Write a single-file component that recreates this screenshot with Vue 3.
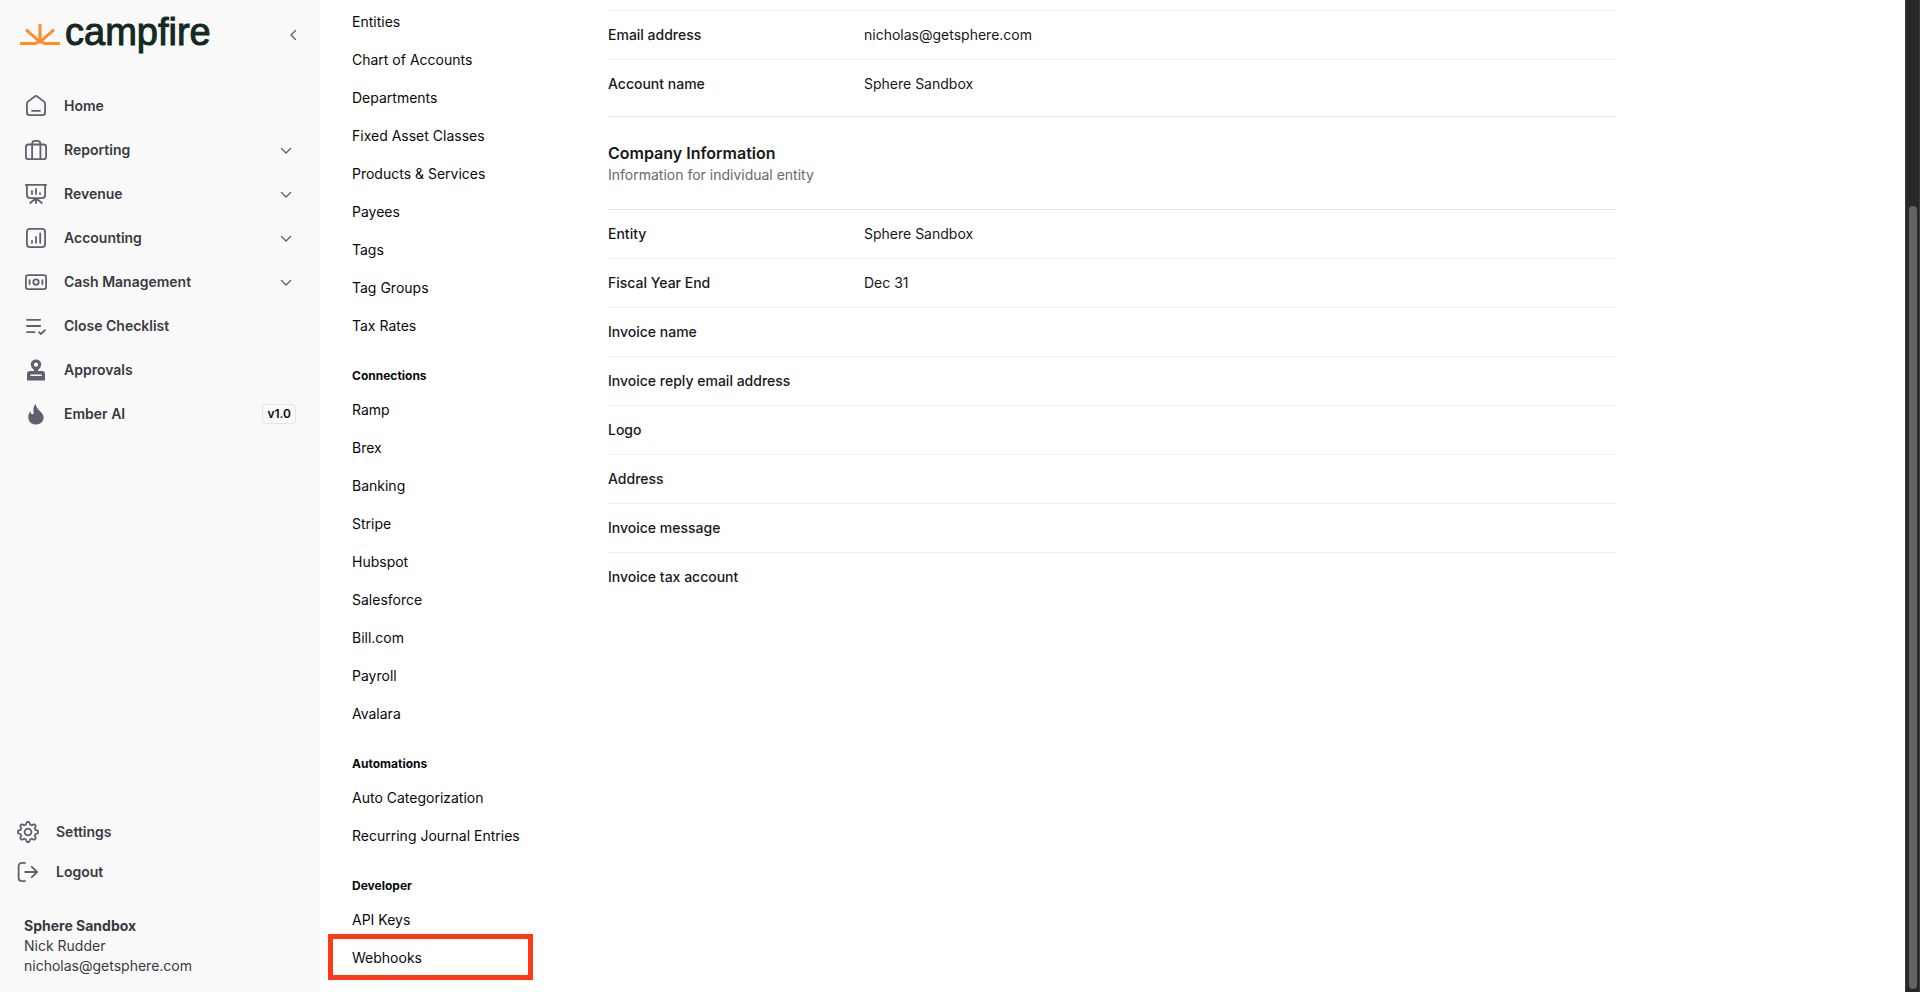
<template>
  <div class="app">
    <aside class="sidebar">
      <header class="sidebar-header">
        <a href="#" class="logo">
          <svg class="logo-mark" viewBox="0 0 40 24" aria-hidden="true">
            <path d="M0 22.4H15.5L18 21H22L24.5 22.4H40" />
            <path d="M20 3V22M6 8.6L20 21L34 8.6" />
          </svg>
          <span class="logo-text">campfire</span>
        </a>
        <button class="collapse" aria-label="Collapse sidebar">
          <svg viewBox="0 0 20 20"><path d="M12.5 5.5L8 10L12.5 14.5" /></svg>
        </button>
      </header>

      <nav class="main-nav">
        <a v-for="item in mainNav" :key="item.label" href="#" class="nav-item">
          <svg class="icon" viewBox="0 0 24 24" aria-hidden="true">
            <path v-for="d in icons[item.icon].lines" :key="d" :d="d" />
            <path v-for="d in icons[item.icon].fills" :key="d" :d="d" class="solid" />
          </svg>
          <span>{{ item.label }}</span>
          <svg v-if="item.expandable" class="chevron" viewBox="0 0 20 20" aria-hidden="true">
            <path d="M5.5 8.5L10 13L14.5 8.5" />
          </svg>
          <span v-if="item.badge" class="badge">{{ item.badge }}</span>
        </a>
      </nav>

      <nav class="bottom-nav">
        <a v-for="item in bottomNav" :key="item.label" href="#" class="nav-item">
          <svg class="icon" viewBox="0 0 24 24" aria-hidden="true">
            <path v-for="d in icons[item.icon].lines" :key="d" :d="d" />
          </svg>
          <span>{{ item.label }}</span>
        </a>
      </nav>

      <div class="account">
        <strong>Sphere Sandbox</strong>
        <span>Nick Rudder</span>
        <span>nicholas@getsphere.com</span>
      </div>
    </aside>

    <nav class="settings-nav">
      <section v-for="group in settingsNav" :key="group.title" class="group">
        <h3 v-if="group.title" class="group-title">{{ group.title }}</h3>
        <a v-for="link in group.links" :key="link" href="#" class="settings-link"
          :class="{ highlighted: link === 'Webhooks' }">{{ link }}</a>
      </section>
    </nav>

    <main class="content">
      <dl class="rows">
        <div v-for="row in accountRows" :key="row.label" class="row">
          <dt>{{ row.label }}</dt>
          <dd>{{ row.value }}</dd>
        </div>
      </dl>
      <header class="section-header">
        <h2>Company Information</h2>
        <p>Information for individual entity</p>
      </header>
      <dl class="rows company">
        <div v-for="row in companyRows" :key="row.label" class="row">
          <dt>{{ row.label }}</dt>
          <dd>{{ row.value }}</dd>
        </div>
      </dl>
    </main>

    <div class="scrollbar">
      <div class="scrollbar-thumb"></div>
    </div>
  </div>
</template>

<script setup>
const mainNav = [
  { label: 'Home', icon: 'home' },
  { label: 'Reporting', icon: 'briefcase', expandable: true },
  { label: 'Revenue', icon: 'presentation', expandable: true },
  { label: 'Accounting', icon: 'chart', expandable: true },
  { label: 'Cash Management', icon: 'cash', expandable: true },
  { label: 'Close Checklist', icon: 'checklist' },
  { label: 'Approvals', icon: 'stamp' },
  { label: 'Ember AI', icon: 'flame', badge: 'v1.0' }
]

const bottomNav = [
  { label: 'Settings', icon: 'gear' },
  { label: 'Logout', icon: 'logout' }
]

const settingsNav = [
  {
    title: '',
    links: [
      'Entities', 'Chart of Accounts', 'Departments', 'Fixed Asset Classes',
      'Products & Services', 'Payees', 'Tags', 'Tag Groups', 'Tax Rates'
    ]
  },
  {
    title: 'Connections',
    links: [
      'Ramp', 'Brex', 'Banking', 'Stripe', 'Hubspot', 'Salesforce', 'Bill.com', 'Payroll', 'Avalara'
    ]
  },
  { title: 'Automations', links: ['Auto Categorization', 'Recurring Journal Entries'] },
  { title: 'Developer', links: ['API Keys', 'Webhooks'] }
]

const accountRows = [
  { label: 'Email address', value: 'nicholas@getsphere.com' },
  { label: 'Account name', value: 'Sphere Sandbox' }
]

const companyRows = [
  { label: 'Entity', value: 'Sphere Sandbox' },
  { label: 'Fiscal Year End', value: 'Dec 31' },
  { label: 'Invoice name', value: '' },
  { label: 'Invoice reply email address', value: '' },
  { label: 'Logo', value: '' },
  { label: 'Address', value: '' },
  { label: 'Invoice message', value: '' },
  { label: 'Invoice tax account', value: '' }
]

// Eight rounded teeth around the centre of a 24px box
const gearOutline = () => {
  const points = []
  for (let i = 0; i < 144; i++) {
    const angle = (i / 144) * Math.PI * 2
    const radius = 8.8 + 1.2 * Math.max(-1, Math.min(1, 1.5 * Math.cos(angle * 8)))
    points.push(`${(12 + radius * Math.sin(angle)).toFixed(2)} ${(12 - radius * Math.cos(angle)).toFixed(2)}`)
  }
  return `M${points.join('L')}Z`
}

const icons = {
  home: {
    lines: [
      'M2.9 9.7Q2.9 8.4 3.9 7.6L11 2.3Q12 1.6 13 2.3L20.1 7.6Q21.1 8.4 21.1 9.7V18.5Q21.1 21.2 18.4 21.2H5.6Q2.9 21.2 2.9 18.5Z',
      'M8 16.8H16'
    ]
  },
  briefcase: {
    lines: [
      'M4.5 6.5H19.5Q22.1 6.5 22.1 9V18.7Q22.1 21.2 19.5 21.2H4.5Q1.9 21.2 1.9 18.7V9Q1.9 6.5 4.5 6.5Z',
      'M8.1 21V6.2Q8.1 2.9 11 2.9H13.4Q16.4 2.9 16.4 6.2V21'
    ]
  },
  presentation: {
    lines: [
      'M1.8 2.8H22.2',
      'M2.9 3V12.5Q2.9 16.2 6.5 16.2H17.5Q21.1 16.2 21.1 12.5V3',
      'M8 9V12M12 7V12M16 11.2V12',
      'M12 17V21M11 17L6.2 21M13 17L17.8 21'
    ]
  },
  chart: {
    lines: [
      'M6 2.8H18Q21.1 2.8 21.1 6V18Q21.1 21.2 18 21.2H6Q2.9 21.2 2.9 18V6Q2.9 2.8 6 2.8Z',
      'M8 15V16.8M12 11V16.8M16.2 7.3V16.8'
    ]
  },
  cash: {
    lines: [
      'M4 5.2H20Q22.1 5.2 22.1 7.3V17Q22.1 19.1 20 19.1H4Q1.9 19.1 1.9 17V7.3Q1.9 5.2 4 5.2Z',
      'M12 9.4A2.7 2.7 0 1 1 12 14.8A2.7 2.7 0 1 1 12 9.4Z',
      'M5.6 10.2V14M18.4 10.2V14'
    ]
  },
  checklist: {
    lines: ['M3 5.8H16.2M3 12H16.2M3 18.2H10.5', 'M15 18.2L17 20L21 16.2']
  },
  stamp: {
    lines: [],
    fills: [
      'M12 1.4C15.1 1.4 17.2 3.6 17.2 6.5C17.2 8.8 15.9 9.9 14.9 11C14.2 11.8 14 12.3 13.9 13H19Q21 13.4 21 16V22.6H3V16Q3 13.4 5 13H10.1C10 12.3 9.8 11.8 9.1 11C8.1 9.9 6.8 8.8 6.8 6.5C6.8 3.6 8.9 1.4 12 1.4ZM12 4.6A2.1 2.1 0 1 0 12 8.8A2.1 2.1 0 1 0 12 4.6ZM6.5 16.4V18H17.7V16.4Z'
    ]
  },
  flame: {
    lines: [],
    fills: [
      'M11.7 2C12 5.4 14 7.2 16.1 9.2C18.2 11.2 19.6 12.9 19.6 15.6C19.6 19.8 16.3 22.5 12 22.5C7.6 22.5 4.3 19.7 4.3 15.2C4.3 12.8 5 10.8 6.2 9.2C6.6 11 7.2 12.2 8.7 12.2C10.2 12.2 9.7 10.4 9.4 8.2C9.1 5.7 10.1 3.4 11.7 2Z'
    ]
  },
  gear: {
    lines: [gearOutline(), 'M12 8.6A3.4 3.4 0 1 1 12 15.4A3.4 3.4 0 1 1 12 8.6Z']
  },
  logout: {
    lines: ['M9 2.9H6.3Q2.6 2.9 2.6 6.6V17.4Q2.6 21.1 6.3 21.1H9', 'M9.2 12H21M15.8 6.8L21.2 12L15.8 17.2']
  }
}
</script>

<style>
body {
  background-color: #ffffff;
}
</style>

<style scoped>
.app {
  display: flex;
  min-height: 100vh;
  font-family: Inter, "Liberation Sans", sans-serif;
  font-size: 14px;
  line-height: 20px;
  color: #18181b;
}

a {
  color: inherit;
  text-decoration: none;
}

svg {
  display: block;
  fill: none;
  stroke: #62606e;
  stroke-linecap: round;
  stroke-linejoin: round;
}

.sidebar {
  display: flex;
  flex-direction: column;
  flex: none;
  width: 320px;
  padding-bottom: 16px;
  box-sizing: border-box;
  background-color: #f9f9f9;
  color: #3a3942;
}

.sidebar-header {
  display: flex;
  align-items: center;
  justify-content: space-between;
  height: 46px;
  padding: 12px 17px 12px 20px;
}

.logo {
  display: flex;
  align-items: baseline;
  align-self: flex-start;
  gap: 5px;
}

.logo-mark {
  width: 40px;
  height: 24px;
  stroke: #ff8d2b;
  stroke-width: 3;
  stroke-linecap: butt;
}

.logo-text {
  font-family: "Liberation Sans", sans-serif;
  font-size: 38px;
  line-height: 40px;
  color: #14291f;
  -webkit-text-stroke: 1px #14291f;
}

.collapse {
  padding: 0;
  border: none;
  background: none;
  cursor: pointer;
}

.collapse svg {
  width: 20px;
  height: 20px;
  stroke-width: 1.4;
}

.main-nav {
  display: flex;
  flex-direction: column;
  padding: 14px 24px 0;
}

.nav-item {
  display: flex;
  align-items: center;
  gap: 16px;
  height: 44px;
  font-weight: 600;
}

.icon {
  width: 24px;
  height: 24px;
  stroke-width: 1.8;
}

.solid {
  fill: #62606e;
  fill-rule: evenodd;
  stroke: none;
}

.chevron {
  width: 20px;
  height: 20px;
  margin-left: auto;
  stroke-width: 1.4;
}

.badge {
  margin-left: auto;
  padding: 0 4px;
  border: 1px solid #e4e4ea;
  border-radius: 4px;
  font-size: 12px;
  line-height: 18px;
  color: #09090b;
}

.bottom-nav {
  margin-top: auto;
  padding: 0 16px;
}

.bottom-nav .nav-item {
  height: 40px;
}

.account {
  display: flex;
  flex-direction: column;
  padding: 24px 24px 0;
}

.settings-nav {
  flex: none;
  width: 288px;
  padding: 4px 32px 16px;
  box-sizing: border-box;
  color: #09090b;
}

.group {
  display: flex;
  flex-direction: column;
  gap: 2px;
}

.group + .group {
  margin-top: 24px;
}

.group-title {
  margin: 0 0 6px;
  font-size: 12px;
  line-height: 16px;
  font-weight: 700;
}

.settings-link {
  position: relative;
  line-height: 36px;
}

/* Red frame laid over the link */
.highlighted::after {
  content: "";
  position: absolute;
  inset: -6px 43px -4px -24px;
  border: 5px solid #ff3816;
}

.content {
  flex: 1;
  max-width: 1008px;
  padding-top: 10px;
}

.rows {
  margin: 0;
}

.row {
  display: grid;
  grid-template-columns: 256px 1fr;
  padding: 14px 0;
  border-top: 1px solid #f1f1f4;
}

.company .row:first-child {
  border-top-color: #e5e5e8;
}

dt {
  font-weight: 500;
}

dd {
  margin: 0;
}

.section-header {
  margin-top: 8px;
  padding: 24px 0;
  border-top: 1px solid #e5e5e8;
}

.section-header h2 {
  margin: 0;
  font-size: 16px;
  line-height: 24px;
  font-weight: 600;
}

.section-header p {
  margin: 0;
  color: #696775;
}

.scrollbar {
  display: flex;
  flex: none;
  width: 15px;
  margin-left: auto;
  padding: 206px 2px 3px 3px;
  border: solid #3b3b3b;
  border-width: 0 1px;
  box-sizing: border-box;
  background-color: #282828;
}

.scrollbar-thumb {
  width: 8px;
  border-radius: 4px;
  background-color: #636363;
}
</style>
